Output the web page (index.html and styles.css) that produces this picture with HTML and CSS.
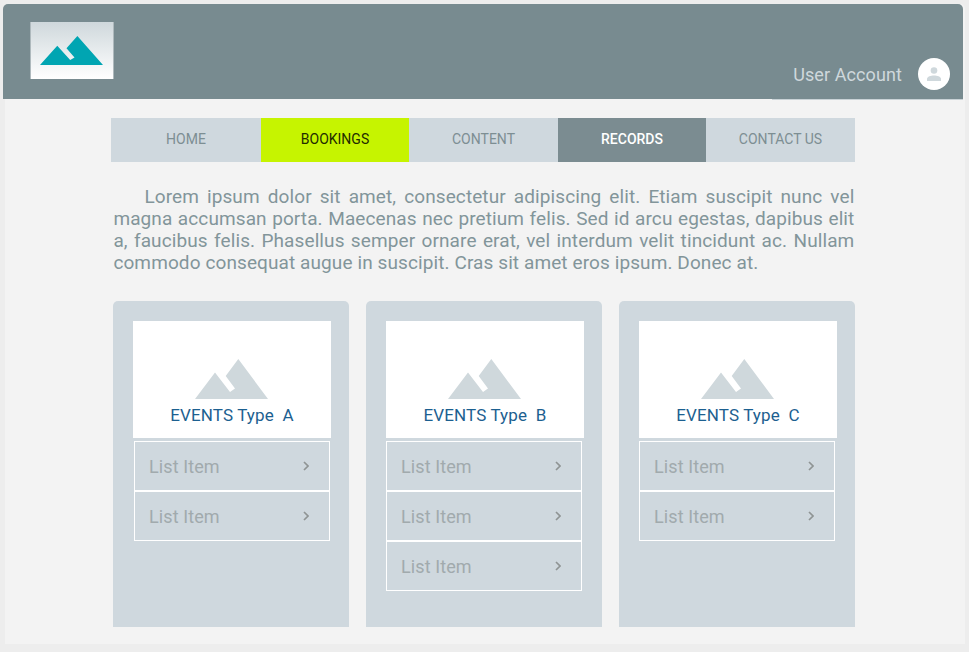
FILE: index.html
```html
<!DOCTYPE html>
<html lang="en">
<head>
<meta charset="utf-8">
<title>Events</title>
<link rel="stylesheet" href="styles.css">
</head>
<body>
<svg class="defs" width="0" height="0" aria-hidden="true">
  <symbol id="mountain" viewBox="0 0 73 40" preserveAspectRatio="none">
    <path d="M0 40 20 13.5 35 33 40 29.5 30.7 17 43.3 0 73 40Z"/>
  </symbol>
  <symbol id="chevron" viewBox="0 0 6 10"><path d="M1 1 5 5 1 9"/></symbol>
</svg>
<div class="page">
  <header class="header">
    <div class="logo"><svg><use href="#mountain"/></svg></div>
    <div class="account">
      <span>User Account</span>
      <div class="avatar"><svg viewBox="0 0 14 14"><circle cx="7" cy="3.5" r="3.3"/><path d="M0 14V11.8C0 9.5 4 8.4 7 8.4S14 9.5 14 11.8V14Z"/></svg></div>
    </div>
  </header>
  <div class="account-rule"></div>
  <main class="content">
    <nav class="nav">
      <a>HOME</a><a class="highlight">BOOKINGS</a><a>CONTENT</a><a class="current">RECORDS</a><a>CONTACT US</a>
    </nav>
    <p class="intro">
      <span class="first">Lorem ipsum dolor sit amet, consectetur adipiscing elit. Etiam suscipit nunc vel</span>
      <span>magna accumsan porta. Maecenas nec pretium felis. Sed id arcu egestas, dapibus elit</span>
      <span>a, faucibus felis. Phasellus semper ornare erat, vel interdum velit tincidunt ac. Nullam</span>
      <span class="last">commodo consequat augue in suscipit. Cras sit amet eros ipsum. Donec at.</span>
    </p>
    <div class="cards">
      <section class="card">
        <div class="cover"><svg><use href="#mountain"/></svg><h2>EVENTS Type  A</h2></div>
        <ul>
          <li>List Item<svg><use href="#chevron"/></svg></li>
          <li>List Item<svg><use href="#chevron"/></svg></li>
        </ul>
      </section>
      <section class="card">
        <div class="cover"><svg><use href="#mountain"/></svg><h2>EVENTS Type  B</h2></div>
        <ul>
          <li>List Item<svg><use href="#chevron"/></svg></li>
          <li>List Item<svg><use href="#chevron"/></svg></li>
          <li>List Item<svg><use href="#chevron"/></svg></li>
        </ul>
      </section>
      <section class="card">
        <div class="cover"><svg><use href="#mountain"/></svg><h2>EVENTS Type  C</h2></div>
        <ul>
          <li>List Item<svg><use href="#chevron"/></svg></li>
          <li>List Item<svg><use href="#chevron"/></svg></li>
        </ul>
      </section>
    </div>
  </main>
</div>
</body>
</html>
```
FILE: styles.css
```css
* { box-sizing: border-box; }
body { margin: 0; height: 652px; overflow: hidden; background: #ededed; font-family: Roboto, "Liberation Sans", sans-serif; }
.defs { display: block; height: 0; }
.page { width: 960px; height: 640px; margin: 4px 0 0 5px; background: #f3f3f3; border-radius: 5px 5px 0 0; }
.header { display: flex; justify-content: space-between; width: 960px; height: 95px; margin-left: -2px; padding: 18px 13px 0 27px; background: #788b90; border-radius: 5px 5px 0 0; }
.logo { width: 84px; height: 57px; padding: 14px 0 0 9px; background: linear-gradient(#cfd8dc, #fff); border: solid #aeb9bd; border-width: 0 1px; }
.logo svg { display: block; width: 63px; height: 29px; fill: #00a5b2; }
.account { display: flex; align-items: center; gap: 16px; height: 32px; margin-top: 36px; color: #cfd8dc; font-size: 18px; letter-spacing: .1px; }
.account-rule { width: 191px; height: 1px; margin-left: 767px; background: #c9d2d6; }
.avatar { display: flex; align-items: center; justify-content: center; width: 32px; height: 32px; border-radius: 50%; background: #fff; }
.avatar svg { width: 14px; height: 14px; fill: #cfd8dc; }
.content { padding: 18px 110px 0 106px; }
.nav { display: grid; grid-template-columns: 150px 148px 149px 148px 149px; height: 44px; background: #cfd8de; }
.nav a { display: flex; align-items: center; justify-content: center; padding-bottom: 2px; color: #7d8e93; font-size: 14px; }
.nav .highlight { background: #c6f400; color: #222b00; }
.nav .current { background: #7b8c91; color: #fff; font-weight: 500; }
.intro { width: 741px; margin: 24px 0 0 2.4px; color: #82959a; font-size: 19px; line-height: 22px; letter-spacing: .1px; }
.intro span { display: block; white-space: nowrap; text-align: justify; text-align-last: justify; }
.intro .first { padding-left: 31px; }
.intro .last { text-align-last: left; }
.cards { display: flex; gap: 17px; margin: 27px 0 0 2px; }
.card { width: 236px; height: 326px; flex: none; padding: 20px; background: #cfd8de; border-radius: 5px 5px 0 0; }
.cover { display: flex; flex-direction: column; align-items: center; width: 198px; height: 117px; padding-top: 38px; background: #fff; }
.cover svg { width: 73px; height: 40px; margin-right: 2px; fill: #cfd8dc; }
.cover h2 { margin: 6px 0 0; color: #1c6090; font-size: 17px; line-height: 20px; font-weight: 400; letter-spacing: .12px; white-space: pre; }
.card ul { width: 196px; margin: 3px 0 0 1px; padding: 0; list-style: none; }
.card + .card ul { margin-left: 0; }
.card li { display: flex; align-items: center; justify-content: space-between; height: 50px; padding: 0 20px 0 14px; border: 1px solid #fff; color: #a1aaad; font-size: 18px; letter-spacing: .1px; }
.card li svg { width: 6px; height: 10px; fill: none; stroke: #8f9494; stroke-width: 1.7; }
```
